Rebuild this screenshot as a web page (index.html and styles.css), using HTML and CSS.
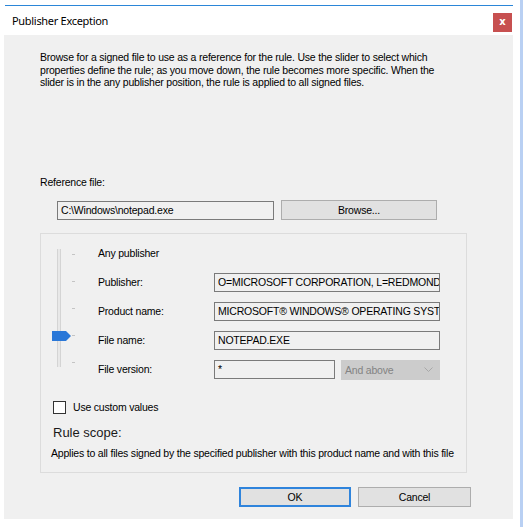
FILE: index.html
```html
<!DOCTYPE html>
<html>
<head>
<meta charset="utf-8">
<link rel="stylesheet" href="styles.css">
</head>
<body>
<div class="window">
  <div class="titlebar">
    <span class="title">Publisher Exception</span>
    <span class="close">x</span>
  </div>
  <div class="client">
    <p class="desc">Browse for a signed file to use as a reference for the rule. Use the slider to select which<br>properties define the rule; as you move down, the rule becomes more specific. When the<br>slider is in the any publisher position, the rule is applied to all signed files.</p>
    <div class="ref-label">Reference file:</div>
    <div class="ref-row">
      <div class="field ref-field">C:\Windows\notepad.exe</div>
      <div class="btn browse">Browse...</div>
    </div>
    <div class="group">
      <div class="grid">
        <div class="slider">
          <div class="track"></div>
          <div class="ticks"><i></i><i></i><i></i><i></i><i></i></div>
          <svg class="thumb" width="19" height="10" viewBox="0 0 19 10"><polygon points="0,0 14,0 19,5 14,10 0,10" fill="#2a78d8"/></svg>
        </div>
        <div class="lbl r1">Any publisher</div>
        <div class="lbl r2">Publisher:</div>
        <div class="cell r2"><div class="field wide">O=MICROSOFT CORPORATION, L=REDMOND, S=WASHINGTON, C=US</div></div>
        <div class="lbl r3">Product name:</div>
        <div class="cell r3"><div class="field wide">MICROSOFT® WINDOWS® OPERATING SYSTEM</div></div>
        <div class="lbl r4">File name:</div>
        <div class="cell r4"><div class="field wide">NOTEPAD.EXE</div></div>
        <div class="lbl r5">File version:</div>
        <div class="cell r5 version">
          <div class="field ver">*</div>
          <div class="combo"><span>And above</span><svg width="9" height="5" viewBox="0 0 9 5"><polyline points="0.5,0.5 4.5,4.5 8.5,0.5" fill="none" stroke="#a8a8a8" stroke-width="1"/></svg></div>
        </div>
      </div>
      <label class="check"><span class="box"></span>Use custom values</label>
      <div class="scope-title">Rule scope:</div>
      <div class="scope-text">Applies to all files signed by the specified publisher with this product name and with this file</div>
    </div>
    <div class="buttons">
      <div class="btn ok">OK</div>
      <div class="btn cancel">Cancel</div>
    </div>
  </div>
</div>
<div class="desk-strip"></div>
</body>
</html>
```
FILE: styles.css
```css
html, body {
  margin: 0;
  padding: 0;
  background: #ffffff;
}
body {
  display: flex;
  width: 523px;
  height: 527px;
  overflow: hidden;
  font-family: "Liberation Sans", Arial, sans-serif;
  font-size: 10.5px;
  letter-spacing: -0.2px;
  color: #000;
}
.window {
  margin-left: 4px;
  margin-top: 5px;
  width: 509px;
  display: flex;
  flex-direction: column;
}
.titlebar {
  height: 29px;
  border-top: 1px solid #2b86d8;
  margin-left: 1px;
  background: #fff;
  display: flex;
  justify-content: space-between;
  align-items: flex-start;
}
.title {
  font-family: "Noto Sans", "Liberation Sans", sans-serif;
  font-size: 11px;
  letter-spacing: -0.3px;
  margin-left: 7px;
  margin-top: 7px;
  line-height: 16px;
  color: #000;
}
.close {
  width: 19px;
  height: 19px;
  margin-top: 7px;
  margin-right: 1px;
  background: #c75050;
  color: #fff;
  font-family: "DejaVu Sans", sans-serif;
  font-size: 10px;
  font-weight: bold;
  letter-spacing: 0;
  line-height: 18px;
  text-align: center;
}
.client {
  height: 484px;
  background: #f0f0f0;
  padding-left: 36px;
  box-sizing: border-box;
}
.desc {
  margin: 16px 0 0 0;
  line-height: 12.5px;
  white-space: nowrap;
}
.ref-label {
  margin-top: 87px;
  line-height: 13px;
}
.ref-row {
  display: flex;
  align-items: flex-start;
  margin-top: 11px;
  padding-left: 17px;
}
.field {
  height: 19px;
  box-sizing: border-box;
  border: 1px solid #7a7a7a;
  background: #f0f0f0;
  padding-left: 3px;
  line-height: 17px;
  white-space: nowrap;
  overflow: hidden;
}
.ref-field {
  width: 217px;
  margin-top: 1px;
}
.btn {
  height: 20px;
  box-sizing: border-box;
  border: 1px solid #adadad;
  background: #e1e1e1;
  text-align: center;
  line-height: 18px;
}
.browse {
  width: 156px;
  margin-left: 7px;
}
.group {
  margin-top: 13px;
  width: 427px;
  height: 240px;
  box-sizing: border-box;
  border: 1px solid #dcdcdc;
  padding-top: 5px;
}
.grid {
  display: grid;
  grid-template-columns: 57px 116px 226px;
  grid-template-rows: repeat(5, 29px);
}
.slider {
  grid-column: 1;
  grid-row: 1 / 6;
  position: relative;
  display: flex;
  align-items: flex-start;
  margin-top: 10px;
}
.track {
  margin-left: 16px;
  width: 2px;
  height: 118px;
  border-left: 1px solid #d4d4d4;
  border-right: 1px solid #d4d4d4;
  background: #e8e8e8;
}
.ticks {
  margin-left: 11px;
  margin-top: 5px;
  height: 109px;
  display: flex;
  flex-direction: column;
  justify-content: space-between;
}
.ticks i {
  display: block;
  width: 3px;
  height: 1px;
  background: #c4c4c4;
}
.thumb {
  position: absolute;
  left: 11px;
  top: 82px;
}
.lbl {
  grid-column: 2;
  display: flex;
  align-items: center;
}
.cell {
  grid-column: 3;
  display: flex;
  align-items: center;
}
.r1 { grid-row: 1; }
.r2 { grid-row: 2; }
.r3 { grid-row: 3; }
.r4 { grid-row: 4; }
.r5 { grid-row: 5; }
.wide {
  width: 226px;
}
.version {
  gap: 6px;
}
.ver {
  width: 121px;
}
.combo {
  width: 99px;
  height: 20px;
  box-sizing: border-box;
  background: #cccccc;
  border: 1px solid #cccccc;
  color: #838383;
  display: flex;
  align-items: center;
  justify-content: space-between;
  padding: 0 6px 0 3px;
  margin-top: 1px;
}
.check {
  display: flex;
  align-items: center;
  margin-top: 17px;
  margin-left: 12px;
  gap: 7px;
  height: 13px;
}
.box {
  width: 13px;
  height: 13px;
  box-sizing: border-box;
  border: 1px solid #333;
  background: #fff;
}
.scope-title {
  margin-top: 11px;
  margin-left: 12px;
  font-size: 13px;
  letter-spacing: 0;
  line-height: 16px;
  color: #1a1a1a;
}
.scope-text {
  margin-top: 6px;
  margin-left: 10px;
  line-height: 13px;
  white-space: nowrap;
}
.buttons {
  display: flex;
  gap: 7px;
  margin-top: 14px;
  padding-left: 199px;
}
.ok {
  width: 112px;
  border: 2px solid #2f84dc;
  line-height: 16px;
}
.cancel {
  width: 113px;
}
.desk-strip {
  margin-left: auto;
  width: 3px;
  height: 527px;
  background: #b9d0f3;
}
```
